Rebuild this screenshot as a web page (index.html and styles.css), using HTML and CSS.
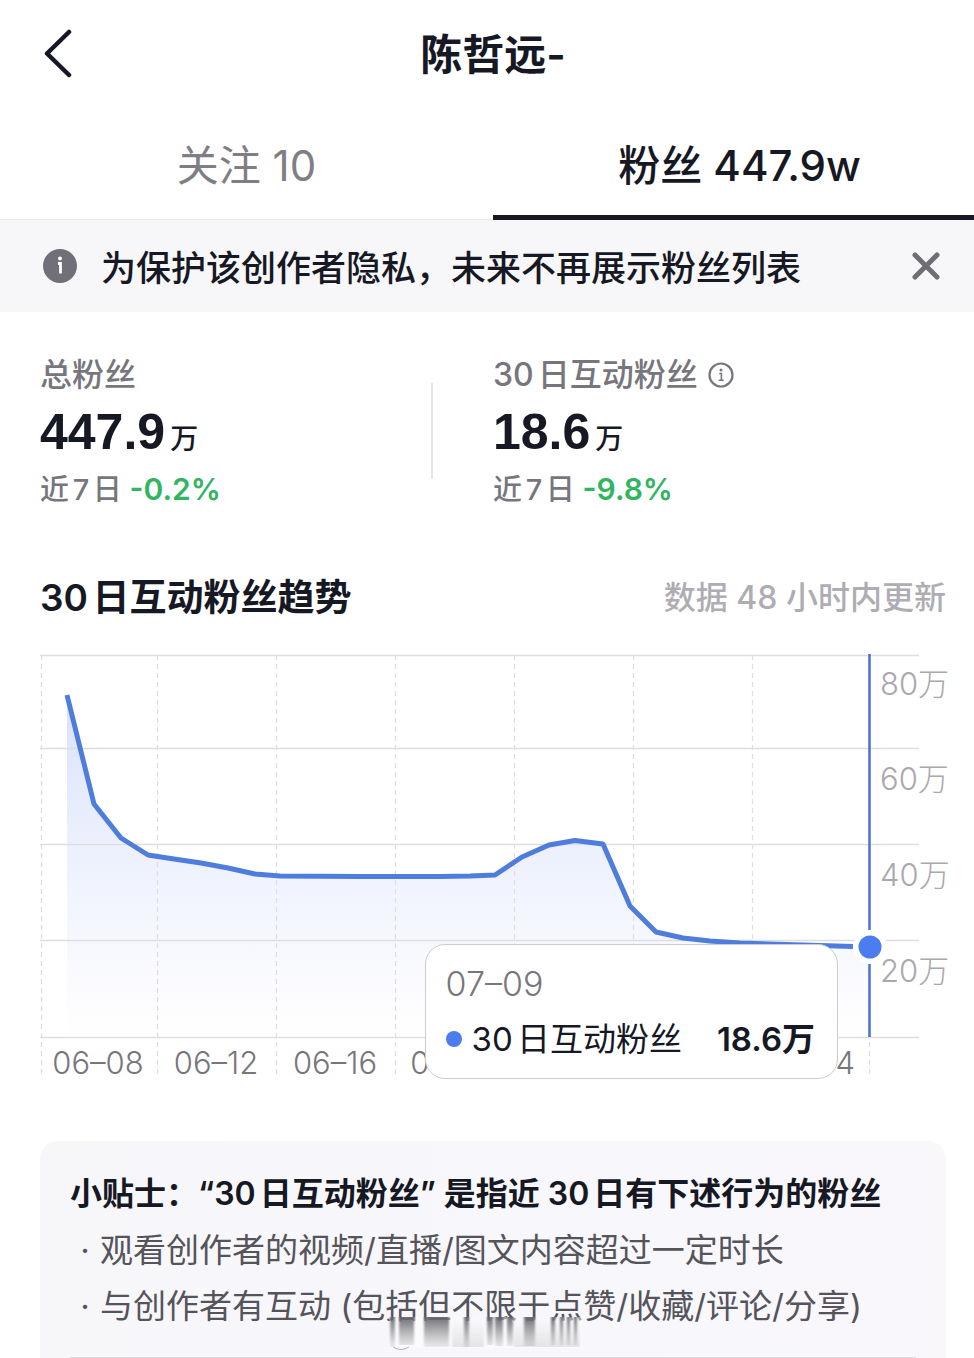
FILE: index.html
```html
<!DOCTYPE html>
<html lang="zh-CN">
<head>
<meta charset="utf-8">
<meta name="viewport" content="width=device-width, initial-scale=1">
<title>陈哲远-</title>
<link rel="stylesheet" href="styles.css">
</head>
<body>
<div class="page">
  <header class="header">
    <button class="icon-button" type="button" aria-label="返回">
      <svg width="40" height="52" viewBox="0 0 40 52"><path d="M29 3 7 24.500l22 21.500" fill="none" stroke="#161823" stroke-width="4.500" stroke-linecap="round" stroke-linejoin="round"/></svg>
    </button>
    <h1 class="title">陈哲远-</h1>
  </header>

  <nav class="tabs">
    <button class="tab" type="button">关注 10</button>
    <button class="tab tab-active" type="button">粉丝 447.9w</button>
  </nav>

  <section class="notice">
    <svg width="36" height="36" viewBox="0 0 36 36" aria-hidden="true"><circle cx="18" cy="18" r="17" fill="#716f77"/><circle cx="18" cy="10.500" r="2" fill="#fff"/><path d="M16 15.500H18.500V25.500" fill="none" stroke="#fff" stroke-width="2.800"/></svg>
    <p class="notice-text">为保护该创作者隐私，未来不再展示粉丝列表</p>
    <button class="icon-button" type="button" aria-label="关闭">
      <svg width="40" height="40" viewBox="0 0 40 40"><path d="m9 9 22 22M31 9 9 31" fill="none" stroke="#6f6e76" stroke-width="5" stroke-linecap="round"/></svg>
    </button>
  </section>

  <main class="content">
    <section class="stats">
      <div class="stat">
        <h2 class="stat-label">总粉丝</h2>
        <p class="stat-value">447.9<span class="unit">万</span></p>
        <p class="stat-trend">近7日 <span class="change">-0.2%</span></p>
      </div>
      <div class="stat">
        <h2 class="stat-label">30日互动粉丝
          <svg width="26" height="26" viewBox="0 0 26 26" aria-hidden="true"><circle cx="13" cy="13" r="11.5" fill="none" stroke="#77767d" stroke-width="2.2"/><circle cx="13" cy="8" r="1.5" fill="#77767d"/><path d="M11.2 11.5H13.4V18M10.7 18.2h5" fill="none" stroke="#77767d" stroke-width="1.6"/></svg>
        </h2>
        <p class="stat-value">18.6<span class="unit">万</span></p>
        <p class="stat-trend">近7日 <span class="change">-9.8%</span></p>
      </div>
    </section>

    <section class="trend">
      <div class="trend-head">
        <h2 class="trend-title">30日互动粉丝趋势</h2>
        <p class="trend-note">数据 48 小时内更新</p>
      </div>
      <div class="chart">
        <svg class="plot" viewBox="0 0 906 430" role="img" aria-label="30日互动粉丝趋势">
          <defs>
            <linearGradient id="area" x1="0" y1="0" x2="0" y2="1">
              <stop offset="0" stop-color="#4f7df0" stop-opacity=".22"/>
              <stop offset=".55" stop-color="#5f80f0" stop-opacity=".09"/>
              <stop offset="1" stop-color="#8080f0" stop-opacity="0"/>
            </linearGradient>
          </defs>
          <path d="M27 45 54 154 81 188 108 205 161 213 215 225 240 226H400L455 225 482 207 509 195 535 190 563 194 590 256 616 282 643 288 670 291 700 293 830 297V387H27Z" fill="url(#area)"/>
          <path class="grid" d="M0 4.5H879M0 97.500H879M0 193.500H879M0 289.500H879M0 386.500H879"/>
          <path class="grid grid-dashed" d="M1.500 4V426M117.500 4V426M236.500 4V426M355.500 4V426M474.500 4V426M593.500 4V426M712.500 4V426M829.500 4V426"/>
          <path class="line" d="M27 44 54 153 81 187 108 204 134 208 161 212 188 217 215 223 240 225 320 225.500 400 225.500 430 225 455 224 482 206 509 194 535 189.500 563 193 590 255 616 281 643 287 670 290 700 292 813 295.500"/>
          <path d="M829.500 3V386" stroke="#4d75d2" stroke-width="2.600"/>
          <circle cx="830" cy="296" r="17" fill="#fff"/>
          <circle cx="830" cy="296" r="11.500" fill="#4b7cf0"/>
          <g class="y-axis">
            <text x="840" y="44">80万</text>
            <text x="840" y="139">60万</text>
            <text x="840" y="235">40万</text>
            <text x="840" y="331">20万</text>
          </g>
          <g class="x-axis">
            <text x="58" y="423">06–08</text>
            <text x="176" y="423">06–12</text>
            <text x="295" y="423">06–16</text>
            <text x="416" y="423">06–20</text>
            <text x="770" y="423">07–04</text>
          </g>
        </svg>
        <div class="tooltip">
          <p class="tooltip-date">07–09</p>
          <p class="tooltip-row"><span class="dot"></span>30日互动粉丝<strong class="tooltip-value">18.6万</strong></p>
        </div>
      </div>
    </section>

    <section class="tips">
      <h2 class="tips-title">小贴士：“30日互动粉丝” 是指近 30日有下述行为的粉丝</h2>
      <ul class="tips-list">
        <li>观看创作者的视频/直播/图文内容超过一定时长</li>
        <li>与创作者有互动 (包括但不限于点赞/收藏/评论/分享)</li>
      </ul>
      <svg class="smudge" width="200" height="36" viewBox="0 0 200 36" aria-hidden="true">
        <defs>
          <linearGradient id="fade" x1="0" y1="0" x2="0" y2="32" gradientUnits="userSpaceOnUse"><stop offset="0" stop-color="#55555c" stop-opacity=".85"/><stop offset="1" stop-color="#88888e" stop-opacity=".1"/></linearGradient>
          <linearGradient id="haze" x1="0" y1="0" x2="0" y2="1"><stop offset="0" stop-color="#88888e" stop-opacity="0"/><stop offset="1" stop-color="#88888e" stop-opacity=".2"/></linearGradient>
          <filter id="soft" x="-10%" y="-10%" width="120%" height="120%"><feGaussianBlur stdDeviation="1.300 .3"/></filter>
        </defs>
        <path d="M3 0H196V31H3Z" fill="#fff" opacity=".45"/>
        <g fill="url(#fade)" filter="url(#soft)">
          <path d="M4 0H9V30H4ZM13 0H28V28H13ZM38 0H63V30H38ZM78 0H83V30H78ZM101 0H107V28H101ZM109 0H117V29H109ZM121 0H127V29H121ZM138 0H149V29H138ZM165 0H169V28H165ZM174 0H177V28H174ZM181 0H184V28H181ZM188 0H191V28H188Z"/>
          <path d="M66 0H98V30H66ZM128 0H194V30H128Z" fill="url(#haze)"/>
        </g>
        <path d="M7 30q8 5 16 0" fill="none" stroke="#b5b5ba"/>
      </svg>
      <hr class="tips-rule">
    </section>
  </main>
</div>
</body>
</html>
```
FILE: styles.css
```css
* {
  box-sizing: border-box;
}

body,
h1,
h2,
p,
ul {
  margin: 0;
  padding: 0;
}

body {
  overflow-x: hidden;
  background: #fff;
  color: #161823;
  font-family: Inter, "Noto Sans CJK SC", sans-serif;
  text-autospace: normal;
}

/* The sheet bleeds past the right edge of the window. */
.page {
  margin-right: -12px;
}

button {
  padding: 0;
  border: 0;
  background: none;
  color: inherit;
  font: inherit;
}

.icon-button,
.icon-button svg {
  display: block;
}

.header {
  display: grid;
  grid-template-columns: 40px 1fr 40px;
  align-items: center;
  height: 110px;
  padding: 0 40px;
}

.title {
  font-size: 42px;
  font-weight: 600;
  line-height: 60px;
  text-align: center;
}

.tabs {
  display: grid;
  grid-template-columns: 1fr 1fr;
  height: 110px;
  border-bottom: 1px solid #e8e8ea;
}

.tab {
  height: 110px;
  border-bottom: 5px solid transparent;
  color: #7f7e84;
  font-size: 42px;
  font-weight: 400;
}

.tab-active {
  border-bottom-color: #161823;
  color: #161823;
  font-weight: 500;
}

.notice {
  display: flex;
  align-items: center;
  height: 92px;
  padding: 0 40px 0 42px;
  background: #f7f7fa;
}

.notice-text {
  flex: 1;
  padding-top: 3px;
  margin-left: 23px;
  font-size: 35px;
  font-weight: 500;
  line-height: 50px;
}

.content {
  padding: 41px 40px 0;
}

.stats {
  display: grid;
  grid-template-columns: 1fr 1fr;
}

.stat:first-child {
  margin-right: 60px;
  background: linear-gradient(#e6e4e9, #e6e4e9) right 30px / 2px 96px no-repeat;
}

.stat-label {
  display: flex;
  align-items: center;
  gap: 10px;
  color: #77767d;
  font-size: 32px;
  font-weight: 500;
  line-height: 44px;
}

.stat-value {
  display: flex;
  align-items: baseline;
  height: 70px;
  font-family: "Liberation Sans", "Noto Sans CJK SC", sans-serif;
  font-size: 50px;
  font-weight: 700;
  line-height: 70px;
}

.unit {
  margin-left: 5px;
  font-size: 28px;
  font-weight: 500;
}

.stat-trend {
  color: #77767d;
  font-size: 29px;
  font-weight: 500;
  line-height: 44px;
}

.change {
  color: #31b562;
  font-size: 30px;
  font-weight: 600;
}

.trend {
  margin-top: 61px;
}

.trend-head {
  display: flex;
  justify-content: space-between;
  align-items: center;
}

.trend-title {
  font-size: 37px;
  font-weight: 600;
  line-height: 50px;
}

.trend-note {
  color: #afadb4;
  font-size: 32px;
  font-weight: 500;
  line-height: 50px;
}

.chart {
  position: relative;
  margin-top: 28px;
}

.plot {
  display: block;
  width: 100%;
  overflow: visible;
}

.grid {
  stroke: #dfdde3;
  stroke-width: 1.5;
}

.grid-dashed {
  stroke-width: 1.2;
  stroke-dasharray: 5 4;
}

.line {
  fill: none;
  stroke: #4f7ddb;
  stroke-width: 5;
  stroke-linejoin: round;
}

.y-axis {
  fill: #aaa8ae;
  font-size: 31px;
  font-weight: 300;
  text-autospace: no-autospace;
}

.x-axis {
  fill: #77767c;
  font-size: 31px;
  font-weight: 300;
  text-anchor: middle;
}

.tooltip {
  position: absolute;
  top: 293px;
  right: 108px;
  padding: 14px 22px 9px 20px;
  border: 1px solid #cbcacf;
  border-radius: 20px;
  background: #fff;
}

.tooltip-date {
  color: #77767c;
  font-size: 34px;
  font-weight: 300;
  line-height: 50px;
}

.tooltip-row {
  display: flex;
  align-items: center;
  font-size: 33px;
  line-height: 60px;
}

.dot {
  width: 16px;
  height: 16px;
  margin-right: 10px;
  border-radius: 50%;
  background: #4b7cf0;
}

.tooltip-value {
  margin-left: 35px;
  font-weight: 600;
  text-autospace: no-autospace;
}

.tips {
  position: relative;
  margin-top: 60px;
  padding: 25px 30px 0;
  border-radius: 18px 18px 0 0;
  background: linear-gradient(90deg, #f7f7fa, #f8f7fc 75%, #faf7fb);
}

.tips-title {
  font-size: 32px;
  font-weight: 600;
  line-height: 56px;
  white-space: nowrap;
}

.tips-list {
  list-style: none;
  color: #55545b;
  font-size: 33px;
  line-height: 56px;
}

.tips-list li {
  display: flex;
  white-space: nowrap;
}

.tips-list li::before {
  content: "·";
  width: 30px;
  text-align: center;
}

.smudge {
  position: absolute;
  top: 176px;
  left: 346px;
}

.tips-rule {
  margin: 23px 0 0;
  border: 0;
  border-top: 2px solid #dddce1;
}
```
